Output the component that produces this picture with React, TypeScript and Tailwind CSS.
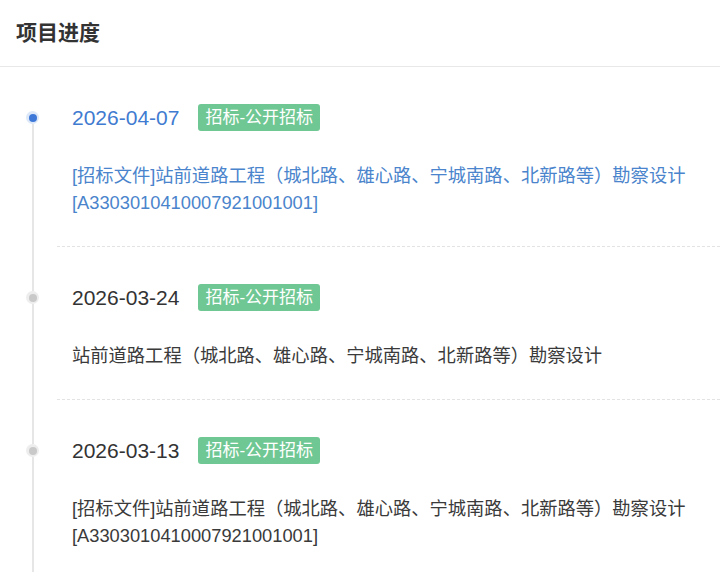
import React from "react";

type Step = {
  date: string;
  tag: string;
  title: string;
  active?: boolean;
};

const steps: Step[] = [
  {
    date: "2026-04-07",
    tag: "招标-公开招标",
    title: "[招标文件]站前道路工程（城北路、雄心路、宁城南路、北新路等）勘察设计[A3303010410007921001001]",
    active: true,
  },
  {
    date: "2026-03-24",
    tag: "招标-公开招标",
    title: "站前道路工程（城北路、雄心路、宁城南路、北新路等）勘察设计",
  },
  {
    date: "2026-03-13",
    tag: "招标-公开招标",
    title: "[招标文件]站前道路工程（城北路、雄心路、宁城南路、北新路等）勘察设计[A3303010410007921001001]",
  },
];

function Dot({ active }: { active?: boolean }) {
  return (
    <div
      className={
        active
          ? "flex h-[13px] w-[13px] shrink-0 items-center justify-center rounded-full bg-[#dce8f8]"
          : "flex h-[13px] w-[13px] shrink-0 items-center justify-center rounded-full bg-[#ededed]"
      }
    >
      <div
        className={
          active
            ? "h-[8px] w-[8px] rounded-full bg-[#3d78d8]"
            : "h-[8px] w-[8px] rounded-full bg-[#c9c9c9]"
        }
      />
    </div>
  );
}

function TimelineItem({ step, first }: { step: Step; first: boolean }) {
  return (
    <div className="flex">
      <div className="flex w-[13px] shrink-0 flex-col items-center">
        <div className={first ? "h-[44px] w-[2px]" : "h-[44px] w-[2px] bg-[#e6e6e6]"} />
        <Dot active={step.active} />
        <div className="w-[2px] flex-1 bg-[#e6e6e6]" />
      </div>

      <div className="ml-[18px] min-w-0 flex-1 border-b border-dashed border-[#e3e3e3] pb-[30px] pl-[15px] pt-[37px]">
        <div className="flex h-[27px] items-center">
          <span
            className={
              step.active
                ? "text-[21px] leading-[27px] text-[#3f7bd0]"
                : "text-[21px] leading-[27px] text-[#333333]"
            }
          >
            {step.date}
          </span>
          <span className="ml-[19px] h-[27px] rounded-[3px] bg-[#6fc793] px-[7px] text-[17px] leading-[27px] text-white">
            {step.tag}
          </span>
        </div>
        <div
          className={
            step.active
              ? "mt-[31px] text-[18.3px] leading-[27px] text-[#4a84cc]"
              : "mt-[31px] text-[18.3px] leading-[27px] text-[#3a3a3a]"
          }
        >
          {step.title}
        </div>
      </div>
    </div>
  );
}

export default function App() {
  return (
    <div
      className="h-[572px] w-[720px] overflow-hidden bg-white"
      style={{ fontFamily: '"Liberation Sans", "Noto Sans CJK SC", sans-serif' }}
    >
      <div className="flex h-[67px] items-center border-b border-[#e8e8e8] px-4">
        <h1 className="text-[21px] font-bold text-[#333333]">项目进度</h1>
      </div>

      <div className="pl-[26px]">
        {steps.map((step, i) => (
          <TimelineItem key={step.date} step={step} first={i === 0} />
        ))}
      </div>
    </div>
  );
}
